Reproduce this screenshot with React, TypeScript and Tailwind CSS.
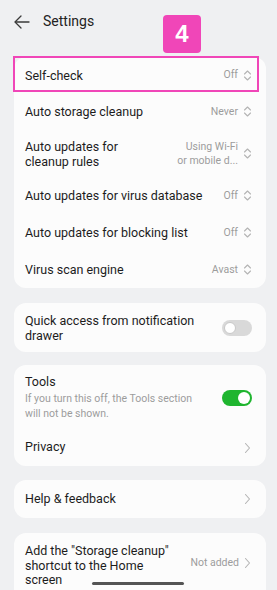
import React from "react";

const UpDown = () => (
  <svg width="9" height="13" viewBox="0 0 9 13" fill="none" stroke="#b4b4b4" strokeWidth="1.1" strokeLinecap="round" strokeLinejoin="round">
    <path d="M1.5 5 L4.5 2 L7.5 5" />
    <path d="M1.5 8 L4.5 11 L7.5 8" />
  </svg>
);

const Right = () => (
  <svg width="7" height="12" viewBox="0 0 7 12" fill="none" stroke="#b4b4b4" strokeWidth="1.1" strokeLinecap="round" strokeLinejoin="round">
    <path d="M1.5 1.5 L5.5 6 L1.5 10.5" />
  </svg>
);

const Row = ({ title, value, h = "h-[37px]" }: { title: React.ReactNode; value: React.ReactNode; h?: string }) => (
  <div className={`flex items-center justify-between pl-[11px] pr-[14px] ${h}`}>
    <div className="text-[12.5px] leading-[15px] text-[#1c1c1c]">{title}</div>
    <div className="flex items-center gap-[5px]">
      <div className="text-[10.5px] leading-[14px] text-[#9c9c9c] text-right">{value}</div>
      <UpDown />
    </div>
  </div>
);

const Toggle = ({ on }: { on: boolean }) =>
  on ? (
    <div className="w-[30px] h-[16px] rounded-full bg-[#1fb52f] flex items-center justify-end pr-[2px]">
      <div className="w-[12px] h-[12px] rounded-full bg-white" />
    </div>
  ) : (
    <div className="w-[30px] h-[16px] rounded-full bg-[#d9d9d9] flex items-center pl-[2px]">
      <div className="w-[12px] h-[12px] rounded-full bg-white border border-[#c8c8c8]" />
    </div>
  );

export default function App() {
  return (
    <div
      className="relative w-[277px] h-[590px] overflow-hidden bg-[#eff0f2]"
      style={{ fontFamily: "Roboto, 'Noto Sans', sans-serif" }}
    >
      {/* header */}
      <div className="flex items-center h-[42px] pl-[14px] pt-[1px]">
        <svg width="16" height="14" viewBox="0 0 16 14" fill="none" stroke="#3a3a3a" strokeWidth="1.3" strokeLinecap="round" strokeLinejoin="round">
          <path d="M15 7 H1.5" />
          <path d="M7 1 L1 7 L7 13" />
        </svg>
        <span className="ml-[13px] text-[14px] text-[#222]">Settings</span>
      </div>

      <div className="absolute left-[163px] top-[15px] w-[38px] h-[38px] rounded-[4px] bg-[#f046b8] flex items-center justify-center">
        <span className="text-white font-bold text-[24px] leading-none" style={{ fontFamily: "'Liberation Sans', Arial, sans-serif" }}>4</span>
      </div>

      <div className="flex flex-col pl-[14px] pr-[11px] pt-[15px]">
        {/* card 1 */}
        <div className="relative bg-[#fcfcfc] rounded-[12px]">
          <Row title="Self-check" value="Off" h="h-[36px]" />
          <Row title="Auto storage cleanup" value="Never" />
          <Row
            title={<>Auto updates for<br />cleanup rules</>}
            value={<>Using Wi-Fi<br />or mobile d...</>}
            h="h-[47px]"
          />
          <Row title="Auto updates for virus database" value="Off" />
          <Row title="Auto updates for blocking list" value="Off" />
          <Row title="Virus scan engine" value="Avast" />
          <div className="absolute left-[-1px] top-[-1px] w-[246px] h-[36px] border-2 border-[#f046b8]" />
        </div>

        {/* card 2 */}
        <div className="mt-[15px] bg-[#fcfcfc] rounded-[12px] h-[49px] flex items-center justify-between pl-[11px] pr-[14px]">
          <div className="text-[12.5px] leading-[15px] text-[#1c1c1c]">
            Quick access from notification<br />drawer
          </div>
          <Toggle on={false} />
        </div>

        {/* card 3 */}
        <div className="mt-[13px] bg-[#fcfcfc] rounded-[12px]">
          <div className="flex items-center justify-between pl-[11px] pr-[14px] pt-[9px] pb-[8px]">
            <div>
              <div className="text-[12.5px] leading-[16px] text-[#1c1c1c]">Tools</div>
              <div className="text-[10.5px] leading-[15px] text-[#9c9c9c] mt-[1px]">
                If you turn this off, the Tools section<br />will not be shown.
              </div>
            </div>
            <Toggle on={true} />
          </div>
          <div className="flex items-center justify-between pl-[11px] pr-[15px] h-[37px]">
            <div className="text-[12.5px] text-[#1c1c1c]">Privacy</div>
            <Right />
          </div>
        </div>

        {/* card 4 */}
        <div className="mt-[14px] bg-[#fcfcfc] rounded-[12px] h-[38px] flex items-center justify-between pl-[11px] pr-[15px]">
          <div className="text-[12.5px] text-[#1c1c1c]">Help &amp; feedback</div>
          <Right />
        </div>

        {/* card 5 */}
        <div className="mt-[15px] bg-[#fcfcfc] rounded-[12px] h-[72px] flex items-start justify-between pl-[11px] pr-[15px] pt-[11px]">
          <div className="text-[12.5px] leading-[14.5px] text-[#1c1c1c]">
            Add the "Storage cleanup"<br />shortcut to the Home<br />screen
          </div>
          <div className="flex items-center gap-[5px] mt-[12px] h-[14px]">
            <span className="text-[10.5px] text-[#9c9c9c]">Not added</span>
            <Right />
          </div>
        </div>
      </div>

      <div className="absolute left-[92px] top-[582px] w-[92px] h-[3px] rounded-full bg-[#555]" />
    </div>
  );
}
